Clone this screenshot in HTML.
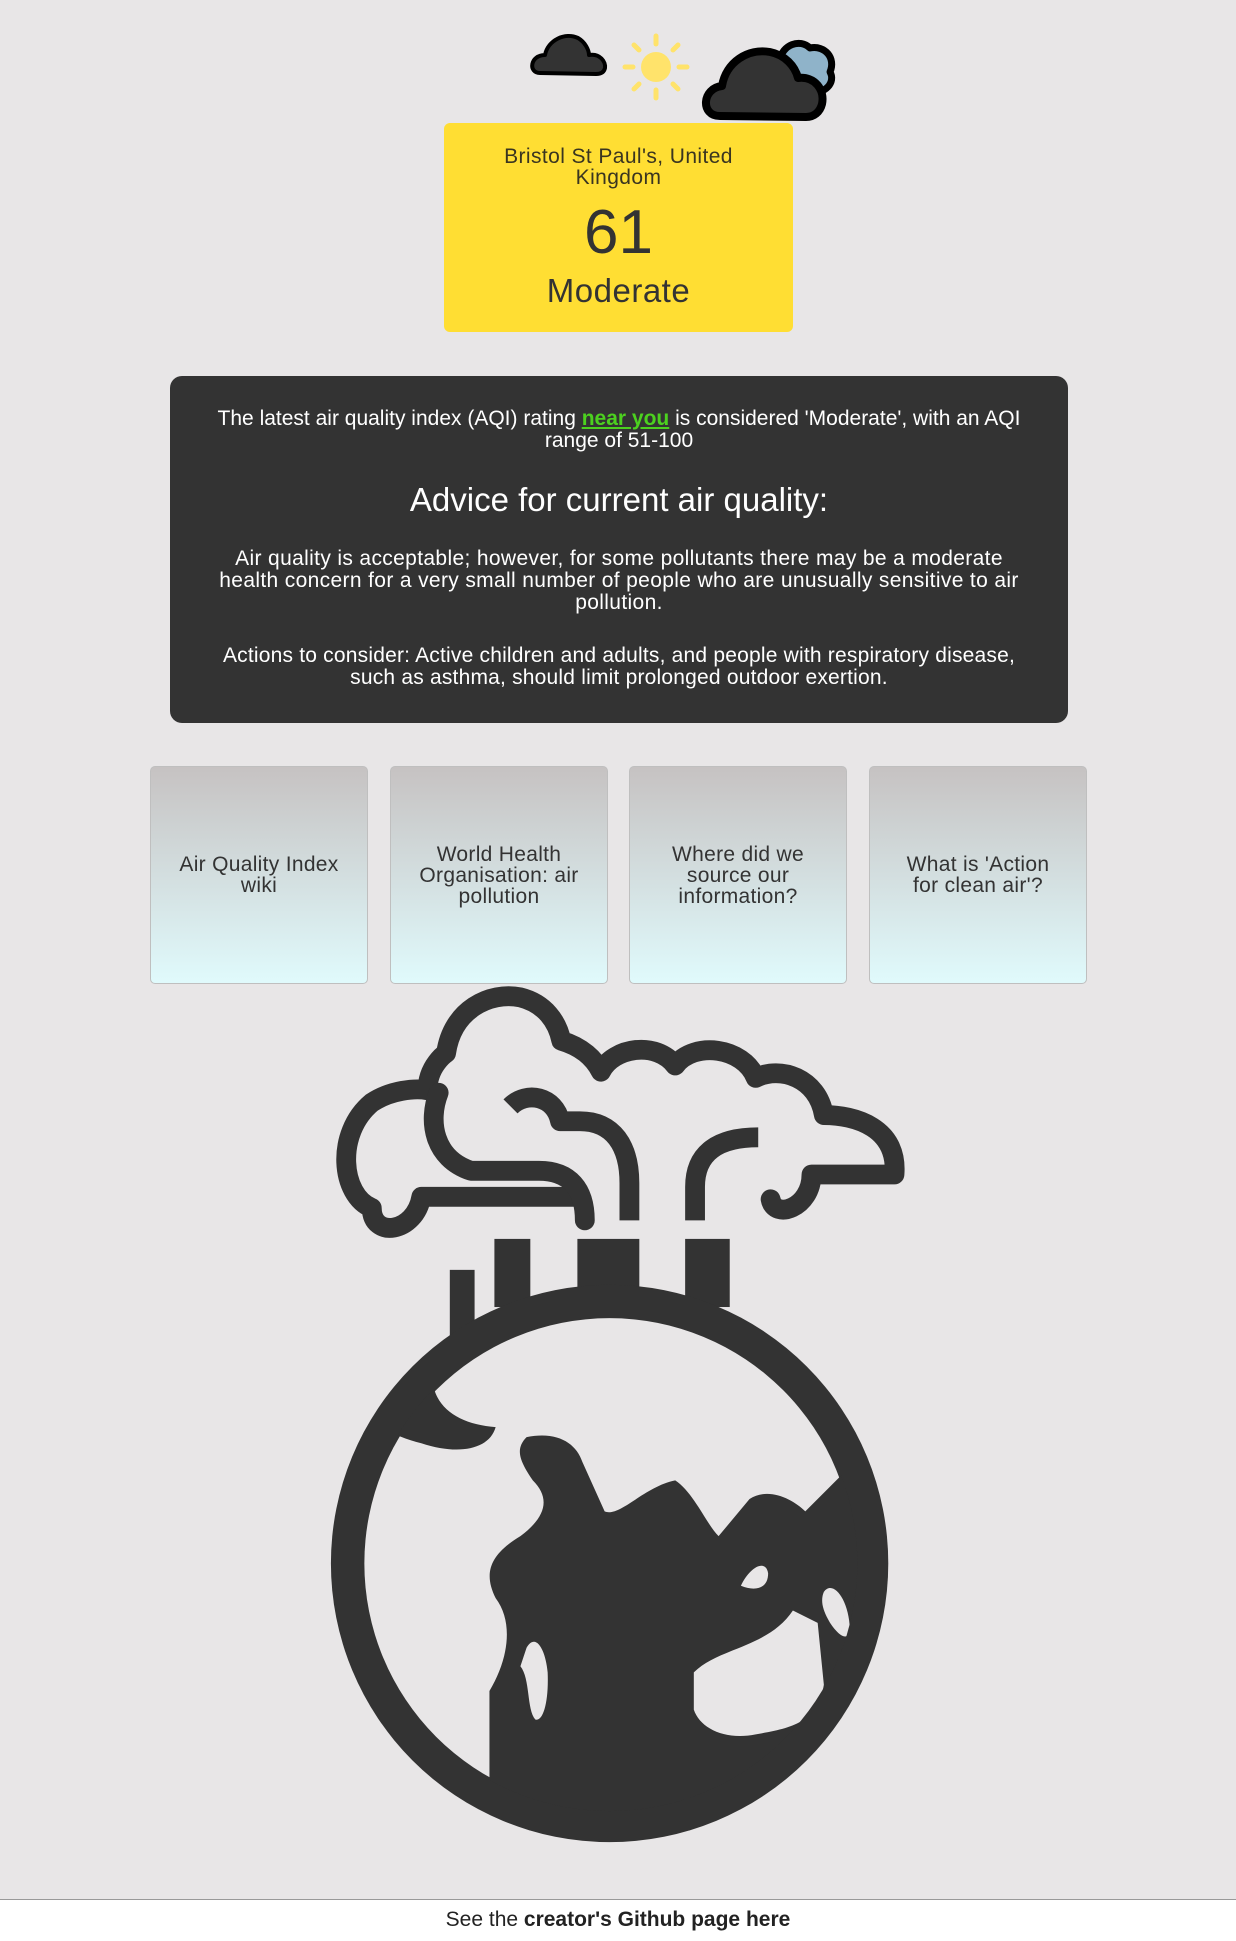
<!DOCTYPE html>
<html><head><meta charset="utf-8"><style>
*{margin:0;padding:0;box-sizing:border-box}
body{width:1236px;height:1941px;background:#e8e6e7;font-family:"Liberation Sans",sans-serif;color:#333;position:relative;overflow:hidden}
.abs{position:absolute}
.yb{left:444px;top:123px;width:349px;height:209px;background:#ffde33;border-radius:6px;text-align:center}
.loc{position:absolute;top:23px;left:0;right:0;font-size:21px;line-height:21px;color:#3a3520;letter-spacing:.4px}
.num{position:absolute;top:78px;left:0;right:0;font-size:62px;line-height:64px;color:#333}
.mod{position:absolute;top:150px;left:0;right:0;font-size:33px;line-height:36px;color:#333;letter-spacing:.5px}
.db{left:170px;top:376px;width:898px;height:347px;background:#333;border-radius:12px;color:#fff;text-align:center}
.db p{position:absolute;left:0;right:0;font-size:21px;line-height:22px;white-space:nowrap}
.db a{color:#4cd11f;font-weight:bold;text-decoration:underline}
.card{top:766px;width:218px;height:218px;border:1px solid #bfbfbf;border-radius:5px;background:linear-gradient(#c6c2c2,#e0fafc);display:flex;align-items:center;justify-content:center;text-align:center;font-size:21px;line-height:21px;color:#333;padding:0 10px;letter-spacing:.3px}
.foot{left:0;top:1899px;width:1236px;height:42px;background:#fff;border-top:1px solid #999;text-align:center;font-size:21px;line-height:40px;color:#222}
</style></head><body>
<svg class="abs" style="left:0;top:0" width="1236" height="130" viewBox="0 0 1236 130">
<path d="M540,73 C528,73 530,55 545,55 C548,40 565,32 578,38 C585,42 589,50 589,55 C600,53 606,62 605,68 C604,73 600,74 596,74 Z" fill="#333" stroke="#000" stroke-width="4" stroke-linejoin="round"/>
<g fill="#ffe36b" stroke="#ffe36b" stroke-width="5" stroke-linecap="round">
<circle cx="656" cy="67" r="15" stroke="none"/>
<line x1="656" y1="36" x2="656" y2="44"/><line x1="656" y1="90" x2="656" y2="98"/>
<line x1="625" y1="67" x2="633" y2="67"/><line x1="679" y1="67" x2="687" y2="67"/>
<line x1="634" y1="45" x2="639" y2="50"/><line x1="673" y1="84" x2="678" y2="89"/>
<line x1="678" y1="45" x2="673" y2="50"/><line x1="639" y1="84" x2="634" y2="89"/>
</g>
<path d="M780,60 C782,45 800,38 810,48 C825,45 836,58 830,72 C836,82 825,95 810,92 Z" fill="#8fb3c9" stroke="#000" stroke-width="7" stroke-linejoin="round"/>
<path d="M720,116 C700,116 702,88 722,86 C726,62 748,48 770,52 C785,55 795,66 798,78 C815,76 825,90 822,104 C820,112 814,117 806,117 Z" fill="#333" stroke="#000" stroke-width="8" stroke-linejoin="round"/>
</svg>
<div class="abs yb"><div class="loc">Bristol St Paul's, United<br>Kingdom</div><div class="num">61</div><div class="mod">Moderate</div></div>
<div class="abs db">
<p style="top:32px">The latest air quality index (AQI) rating <a>near you</a> is considered 'Moderate', with an AQI<br>range of 51-100</p>
<p style="top:106px;font-size:33px;line-height:36px">Advice for current air quality:</p>
<p style="top:172px;letter-spacing:.35px">Air quality is acceptable; however, for some pollutants there may be a moderate<br>health concern for a very small number of people who are unusually sensitive to air<br>pollution.</p>
<p style="top:269px;letter-spacing:.2px">Actions to consider: Active children and adults, and people with respiratory disease,<br>such as asthma, should limit prolonged outdoor exertion.</p>
</div>
<div class="abs card" style="left:150px">Air Quality Index<br>wiki</div>
<div class="abs card" style="left:390px">World Health<br>Organisation: air<br>pollution</div>
<div class="abs card" style="left:629px">Where did we<br>source our<br>information?</div>
<div class="abs card" style="left:869px">What is 'Action<br>for clean air'?</div>
<svg class="abs" style="left:322px;top:985px" width="595" height="867" viewBox="260 795 480 700">
<defs><clipPath id="c"><circle cx="492" cy="1262" r="200"/></clipPath></defs>
<g fill="none" stroke="#333" stroke-width="16" stroke-linecap="round" stroke-linejoin="round">
<path d="M465,966 H340 C335,995 300,1000 300,975 C275,965 270,915 300,890 C315,880 335,878 345,880 C345,860 360,850 360,850 C365,815 395,800 420,805 C440,810 450,825 453,840 C470,845 480,855 485,865 C495,845 530,840 545,860 C560,840 600,845 610,870 C630,860 660,870 665,900 C690,900 725,910 722,948 H655 C655,975 625,985 622,968"/>
<path d="M354,882 C345,905 350,935 380,945 H435 C460,945 472,960 472,985"/>
<path d="M412,893 C425,880 448,885 452,905 H468 C495,905 508,925 508,955 V985" stroke-linecap="butt"/>
<path d="M561,985 V958 C561,930 580,918 612,918" stroke-linecap="butt"/>
</g>
<g fill="#333">
<rect x="363" y="1025" width="20" height="55"/><rect x="399" y="1000" width="29" height="55"/>
<rect x="466" y="1000" width="50" height="50"/><rect x="553" y="1000" width="36" height="55"/>
<circle cx="492" cy="1262" r="225"/>
</g>
<circle cx="492" cy="1262" r="198" fill="#e8e6e7"/>
<g clip-path="url(#c)">
<path fill="#333" d="M425,1160 C450,1155 465,1165 470,1180 L488,1220 C500,1225 520,1200 545,1195 C560,1205 570,1230 580,1240 L605,1210 C620,1200 640,1210 650,1220 L690,1180 L730,1200 L730,1500 L395,1500 V1365 C410,1340 415,1310 400,1290 C390,1270 395,1255 420,1240 C440,1225 445,1210 430,1195 C420,1180 415,1170 425,1160 Z"/>
<path fill="#333" d="M290,1110 L350,1120 C355,1140 375,1150 400,1152 C395,1170 370,1175 340,1165 C320,1160 300,1150 290,1140 Z"/>
<g fill="#e8e6e7">
<path d="M560,1350 C580,1330 620,1330 640,1300 L660,1310 L665,1360 C660,1390 640,1395 610,1400 C585,1405 565,1395 560,1380 Z"/>
<path d="M425,1330 C432,1318 440,1330 442,1350 C443,1375 438,1390 432,1388 C425,1380 428,1355 420,1345 Z"/>
<path d="M665,1285 C672,1275 685,1290 686,1315 C685,1325 678,1322 670,1310 C664,1300 662,1292 665,1285 Z"/>
<path d="M598,1280 C605,1265 618,1258 620,1270 C620,1282 610,1285 598,1280 Z"/>
</g>
</g>
</svg>
<div class="abs foot">See the <b style="font-weight:600">creator's Github page here</b></div>
</body></html>
